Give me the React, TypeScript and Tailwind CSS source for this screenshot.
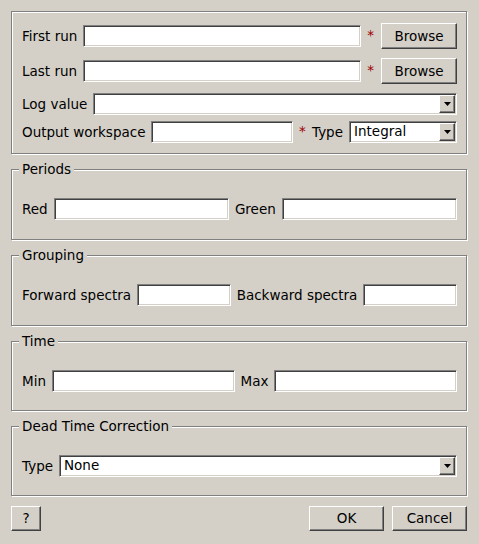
import React from 'react'

const sunken =
  'bg-white border border-t-[#808080] border-l-[#808080] border-b-white border-r-white shadow-[inset_1px_1px_0_#404040,inset_-1px_-1px_0_#d4d0c8]'
const raised =
  'bg-[#d4d0c8] border border-t-white border-l-white border-b-[#404040] border-r-[#404040] shadow-[inset_-1px_-1px_0_#808080]'
const etched = 'border border-[#808080] shadow-[inset_1px_1px_0_#ffffff,1px_1px_0_#ffffff]'

function Input({ className = '' }: { className?: string }) {
  return <div className={`h-[22px] ${sunken} ${className}`} />
}

function Combo({ value = '', className = '' }: { value?: string; className?: string }) {
  return (
    <div className={`h-[22px] flex items-center ${sunken} ${className}`}>
      <span className="flex-1 pl-[4px] leading-none">{value}</span>
      <div className={`w-[16px] h-[18px] mr-[1px] flex items-center justify-center ${raised}`}>
        <svg width="7" height="4" viewBox="0 0 7 4">
          <polygon points="0,0 7,0 3.5,4" fill="#000" />
        </svg>
      </div>
    </div>
  )
}

function Button({ label, className = '' }: { label: string; className?: string }) {
  return (
    <div className={`flex items-center justify-center ${raised} ${className}`}>
      {label}
    </div>
  )
}

function Star() {
  return <span className="w-[7px] text-[#a00000] leading-none text-center">*</span>
}

function Group({ title, height, className = '', children }: { title: string; height: string; className?: string; children: React.ReactNode }) {
  return (
    <div className={`relative ${etched} ${height} pt-[28px] pl-[10px] pr-[9px] ${className}`}>
      <div className="absolute left-[7px] top-[-9px] px-[3px] leading-[16px] bg-[#d4d0c8]">{title}</div>
      {children}
    </div>
  )
}

export default function App() {
  return (
    <div className="w-[479px] h-[544px] bg-[#d4d0c8] pt-[11px] pl-[11px] text-[13.5px] text-black font-['DejaVu_Sans',sans-serif] flex flex-col">
      <div className="w-[456px] flex flex-col">
        {/* main box */}
        <div className={`${etched} h-[143px] pt-[11px] pl-[10px] pr-[9px] flex flex-col`}>
          <div className="h-[26px] flex items-center">
            <span>First run</span>
            <Input className="flex-1 ml-[6px]" />
            <span className="ml-[6px] flex"><Star /></span>
            <Button label="Browse" className="ml-[7px] w-[76px] h-[26px]" />
          </div>
          <div className="h-[26px] mt-[9px] flex items-center">
            <span>Last run</span>
            <Input className="flex-1 ml-[6px]" />
            <span className="ml-[6px] flex"><Star /></span>
            <Button label="Browse" className="ml-[7px] w-[76px] h-[26px]" />
          </div>
          <div className="h-[22px] mt-[9px] flex items-center">
            <span>Log value</span>
            <Combo className="flex-1 ml-[6px]" />
          </div>
          <div className="h-[22px] mt-[6px] flex items-center">
            <span>Output workspace</span>
            <Input className="flex-1 ml-[6px]" />
            <span className="ml-[6px] flex"><Star /></span>
            <span className="ml-[6px]">Type</span>
            <Combo value="Integral" className="ml-[6px] w-[108px]" />
          </div>
        </div>

        <Group title="Periods" height="h-[71px]" className="mt-[15px]">
          <div className="h-[22px] flex items-center gap-[6px]">
            <span>Red</span>
            <Input className="flex-1" />
            <span>Green</span>
            <Input className="flex-1" />
          </div>
        </Group>

        <Group title="Grouping" height="h-[71px]" className="mt-[15px]">
          <div className="h-[22px] flex items-center gap-[6px]">
            <span>Forward spectra</span>
            <Input className="flex-1" />
            <span>Backward spectra</span>
            <Input className="flex-1" />
          </div>
        </Group>

        <Group title="Time" height="h-[70px]" className="mt-[15px]">
          <div className="h-[22px] flex items-center gap-[6px]">
            <span>Min</span>
            <Input className="flex-1" />
            <span>Max</span>
            <Input className="flex-1" />
          </div>
        </Group>

        <Group title="Dead Time Correction" height="h-[70px]" className="mt-[15px]">
          <div className="h-[22px] flex items-center gap-[6px]">
            <span>Type</span>
            <Combo value="None" className="flex-1" />
          </div>
        </Group>

        <div className="mt-[10px] flex items-center">
          <Button label="?" className="w-[30px] h-[25px]" />
          <div className="flex-1" />
          <Button label="OK" className="w-[75px] h-[25px]" />
          <Button label="Cancel" className="w-[75px] h-[25px] ml-[8px]" />
        </div>
      </div>
    </div>
  )
}
